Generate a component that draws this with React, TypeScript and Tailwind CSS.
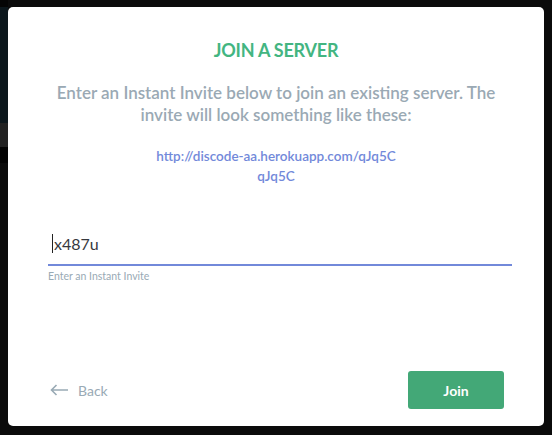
import React from "react";

export default function App() {
  return (
    <div className="flex w-[552px] h-[435px] bg-[#0b0b0b] overflow-hidden" style={{ fontFamily: "Lato, 'Open Sans', sans-serif" }}>
      <div className="flex flex-col w-[8px] shrink-0">
        <div className="h-[7px] bg-[#050505]" />
        <div className="h-[116px] bg-[#0c171c]" />
        <div className="h-[24px] bg-[#222222]" />
        <div className="h-[16px] bg-[#030303]" />
        <div className="flex-1 bg-[#0b0b0b]" />
      </div>
      <div className="mt-[7px] mb-[9px] w-[536px] shrink-0 bg-white rounded-[5px] flex flex-col">
        <div className="pt-[32px] text-center text-[18px] leading-[22px] font-bold text-[#43b581] tracking-[-0.2px]">
          JOIN A SERVER
        </div>
        <p className="mt-[21px] px-[40px] text-center text-[17px] leading-[22px] font-semibold text-[#9aa9b4]">
          Enter an Instant Invite below to join an existing server. The invite will look something like these:
        </p>
        <div className="mt-[20px] text-center text-[13.5px] leading-[20px] font-semibold text-[#7289da]">
          <div>http://discode-aa.herokuapp.com/qJq5C</div>
          <div>qJq5C</div>
        </div>
        <div className="mt-[42px] ml-[40px] mr-[32px]">
          <div className="flex items-start pt-[6px] pb-[11px] leading-[19px] pl-[4px] text-[16px] text-[#36393e] border-b-2 border-[#7289da]">
            <span className="w-[1px] h-[19px] bg-[#222] mr-[1px]" />
            x487u
          </div>
          <div className="mt-[3px] text-[10.5px] leading-[14px] text-[#99aab5]">Enter an Instant Invite</div>
        </div>
        <div className="flex-1" />
        <div className="flex items-center justify-between pl-[42px] pr-[40px] pb-[17px]">
          <div className="flex items-center gap-[10px] text-[14px] text-[#99aab5]">
            <svg width="18" height="12" viewBox="0 0 18 12" fill="none" stroke="#99aab5" strokeWidth="1.6">
              <path d="M18 6H1.5M6.5 1L1.5 6l5 5" />
            </svg>
            <span>Back</span>
          </div>
          <button className="w-[96px] h-[38px] rounded-[3px] bg-[#43a877] text-white text-[14px] font-bold">Join</button>
        </div>
      </div>
      <div className="flex-1 bg-[#0b0b0b]" />
    </div>
  );
}
